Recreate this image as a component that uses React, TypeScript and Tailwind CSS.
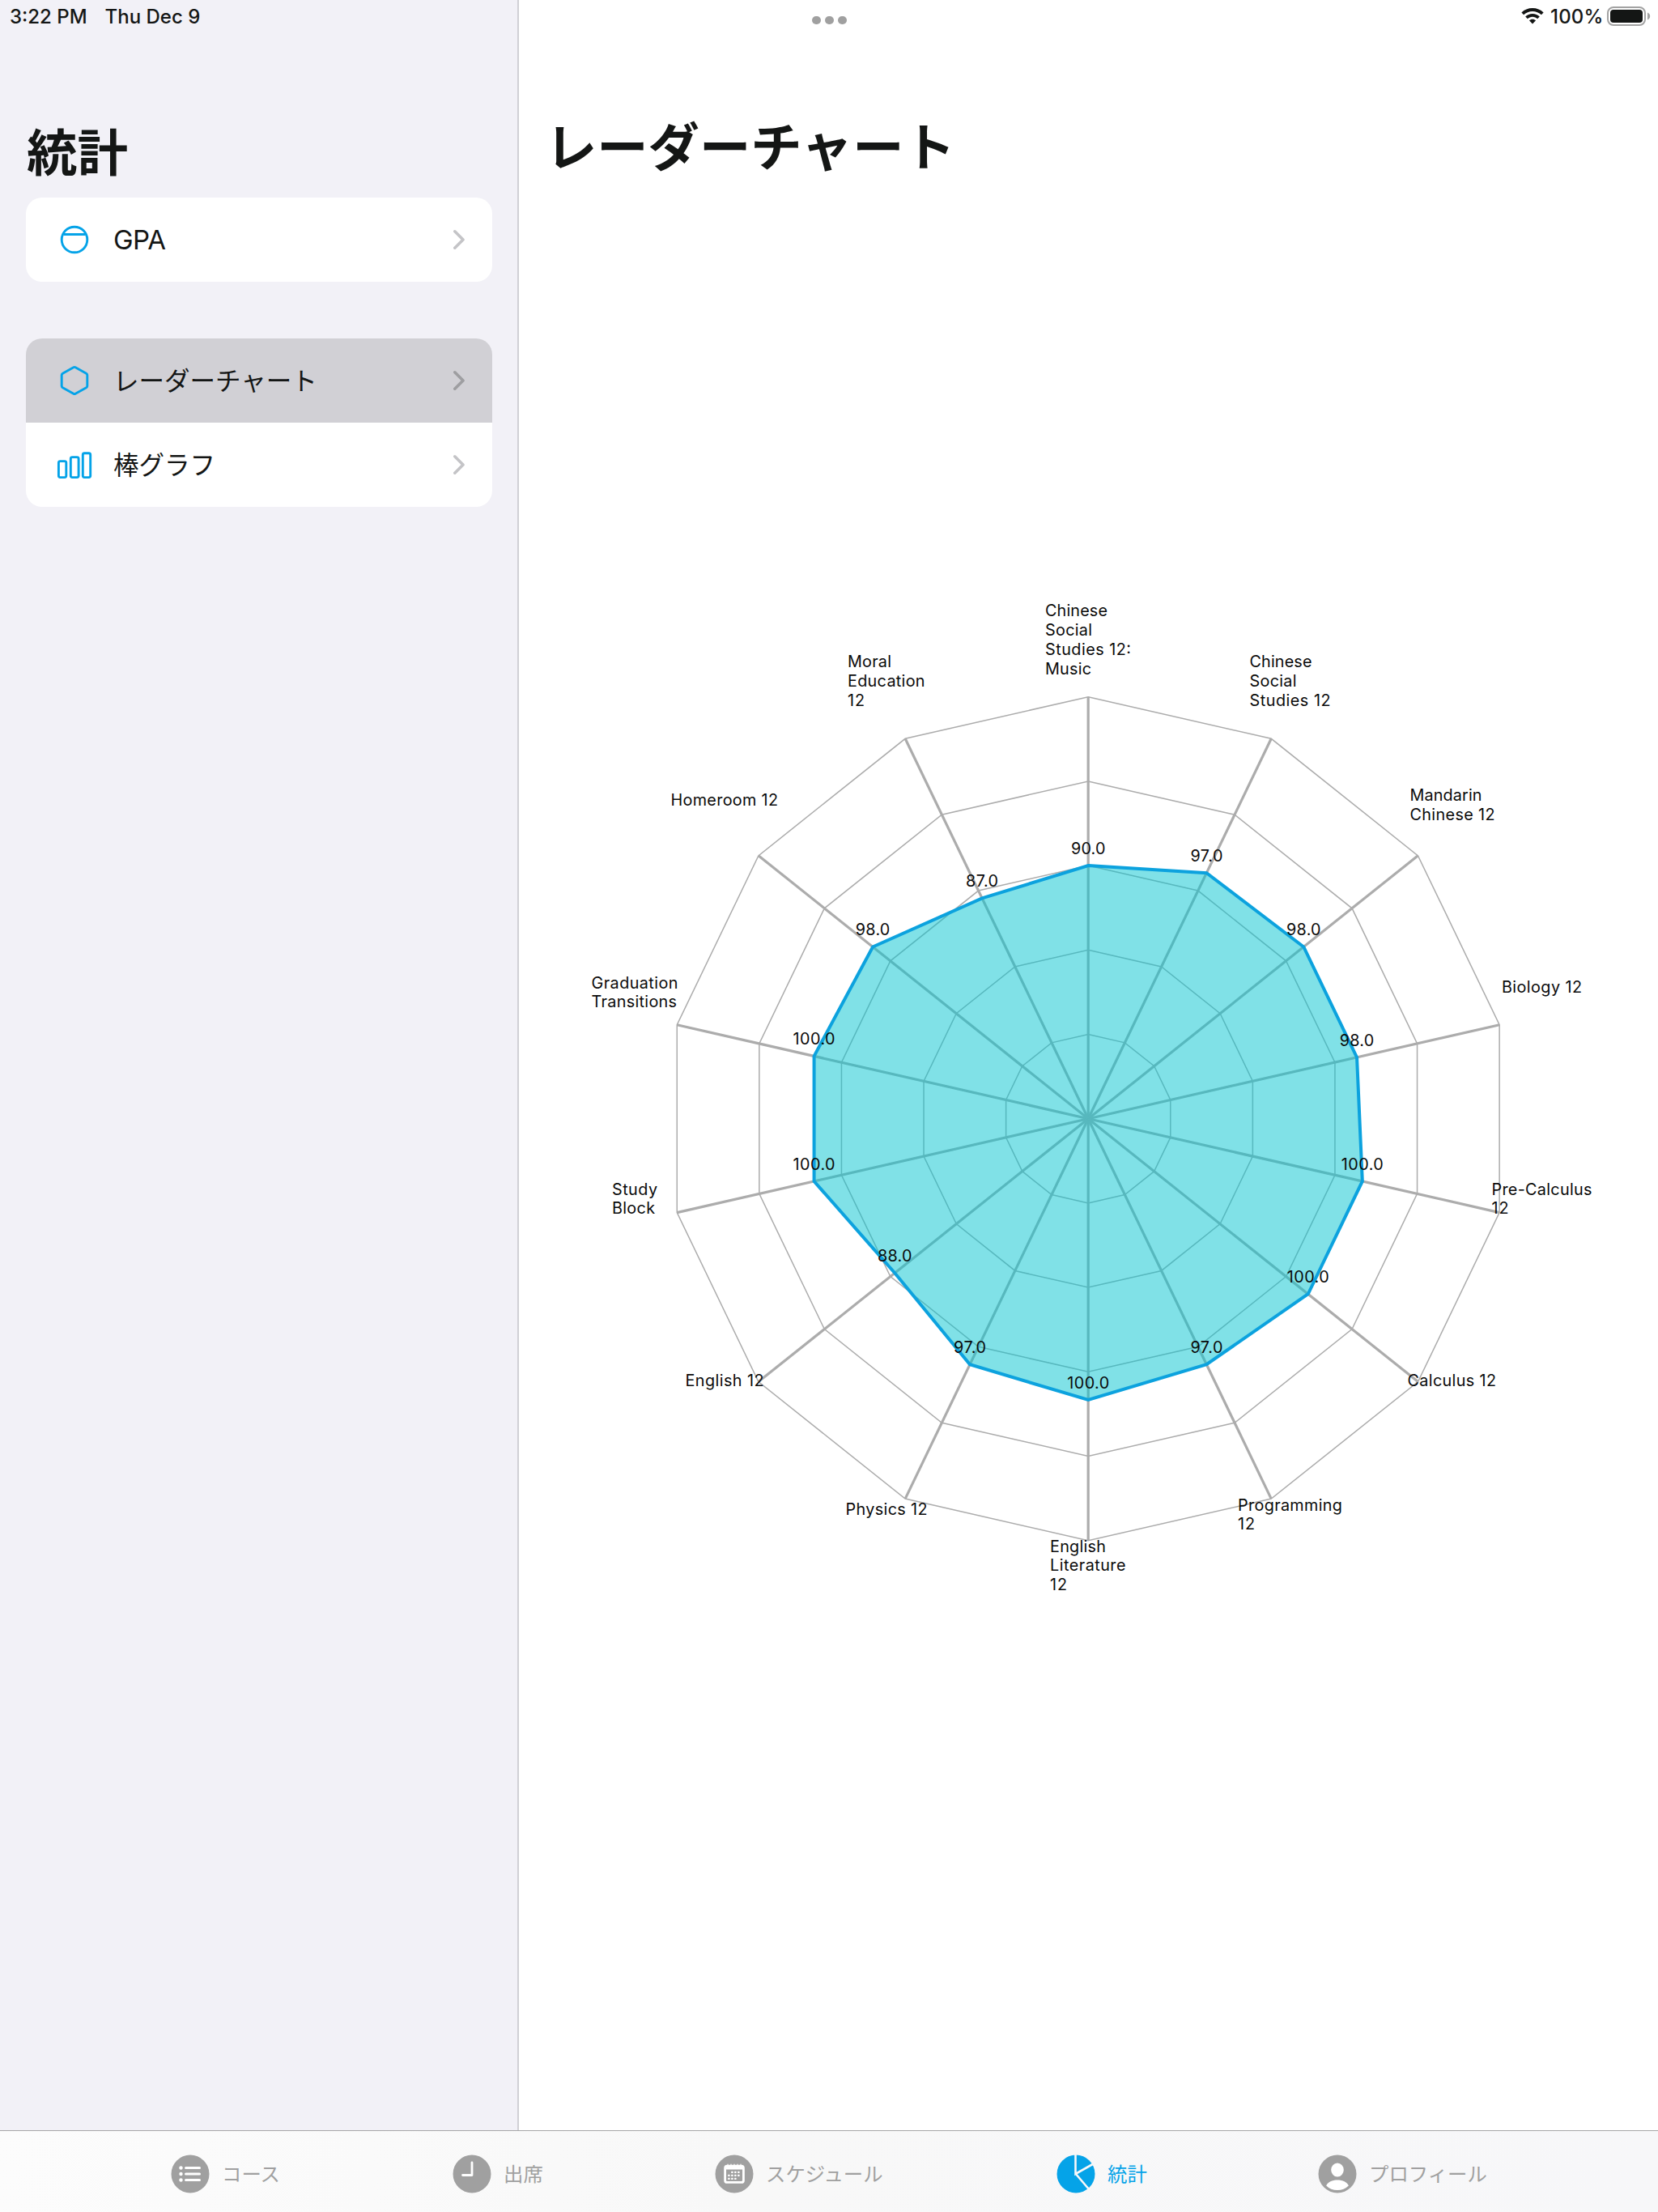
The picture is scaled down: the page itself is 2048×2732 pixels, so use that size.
import React from "react";

type Subject = {
  lines: string[];
  widths: number[];
  x: number;
  y: number[];
  value: number;
};

const CX = 1344.2 - 641;
const CY = 1381.7 - 300;
const R = 521;

const subjects: Subject[] = [
  { lines: ["Chinese", "Social", "Studies 12:", "Music"], widths: [76, 57, 105, 56], x: 1291.5, y: [761, 785, 809, 833], value: 90 },
  { lines: ["Chinese", "Social", "Studies 12"], widths: [76, 57, 99], x: 1544, y: [824, 848, 872], value: 97 },
  { lines: ["Mandarin", "Chinese 12"], widths: [88, 104], x: 1742, y: [989, 1013], value: 98 },
  { lines: ["Biology 12"], widths: [98], x: 1855.5, y: [1226], value: 98 },
  { lines: ["Pre-Calculus", "12"], widths: [123, 20], x: 1843, y: [1476, 1499], value: 100 },
  { lines: ["Calculus 12"], widths: [108.5], x: 1739, y: [1712], value: 100 },
  { lines: ["Programming", "12"], widths: [128, 20], x: 1529.5, y: [1865.5, 1889], value: 97 },
  { lines: ["English", "Literature", "12"], widths: [68, 92.5, 20], x: 1297.5, y: [1916.5, 1940, 1964], value: 100 },
  { lines: ["Physics 12"], widths: [100], x: 1045, y: [1871], value: 97 },
  { lines: ["English 12"], widths: [96], x: 847, y: [1712], value: 88 },
  { lines: ["Study", "Block"], widths: [55, 52], x: 756.5, y: [1476, 1499], value: 100 },
  { lines: ["Graduation", "Transitions"], widths: [106, 104.5], x: 731, y: [1220.5, 1244], value: 100 },
  { lines: ["Homeroom 12"], widths: [131.5], x: 829, y: [995], value: 98 },
  { lines: ["Moral", "Education", "12"], widths: [53, 94.5, 20], x: 1047.5, y: [824, 848, 872], value: 87 },
];

const point = (i: number, r: number) => {
  const a = (i * 2 * Math.PI) / subjects.length;
  return [CX + r * Math.sin(a), CY - r * Math.cos(a)] as const;
};

const ring = (radius: (i: number) => number) =>
  subjects.map((_, i) => point(i, radius(i)).map((n) => n.toFixed(2)).join(",")).join(" ");

const valueWidth = (v: number) => (v === 100 ? 52 : v === 97 || v === 87 ? 40 : 42.5);

function RadarChart() {
  return (
    <svg width="1407" height="1800" viewBox="0 0 1407 1800" className="block font-[Inter,sans-serif]">
      <g fill="none" stroke="#acacac">
        {subjects.map((_, i) => {
          const [x, y] = point(i, R);
          return <line key={i} x1={CX} y1={CY} x2={x} y2={y} strokeWidth="3.2" />;
        })}
        {[1, 2, 3, 4, 5].map((n) => (
          <polygon key={n} points={ring(() => (R * n) / 5)} strokeWidth="1.5" />
        ))}
      </g>
      <polygon points={ring((i) => (R * subjects[i].value) / 150)} fill="#02c4d0" fillOpacity="0.5" />
      <polygon
        points={ring((i) => (R * subjects[i].value) / 150)}
        fill="none"
        stroke="#0ca2de"
        strokeWidth="4"
      />
      {subjects.map((s, i) => {
        const [x, y] = point(i, (R * s.value) / 150);
        return (
          <g key={i} fill="#0a0a0a">
            <text x={x} y={y - 14} fontSize="19.8" textAnchor="middle" textLength={valueWidth(s.value)}>
              {s.value.toFixed(1)}
            </text>
            {s.lines.map((line, j) => (
              <text key={j} x={s.x - 641.5} y={s.y[j] - 300} fontSize="19.8" textLength={s.widths[j] + 1}>
                {line}
              </text>
            ))}
          </g>
        );
      })}
    </svg>
  );
}

function Chevron({ active = false }: { active?: boolean }) {
  return (
    <svg width="16" height="28" viewBox="0 0 16 28" fill="none" className={active ? "text-[#9e9ea1]" : "text-[#c4c4c7]"}>
      <path d="M1.8 3.8 12 14 1.8 24.2" stroke="currentColor" strokeWidth="3.6" strokeLinecap="round" strokeLinejoin="round" />
    </svg>
  );
}

function GaugeIcon() {
  return (
    <svg width="44" height="44" viewBox="0 0 44 44" fill="none" stroke="#05a3e8" strokeWidth="2.9">
      <circle cx="22" cy="22" r="15.8" />
      <path d="M8.5 15.5h27" />
    </svg>
  );
}

function HexagonIcon() {
  return (
    <svg width="44" height="44" viewBox="0 0 44 44" fill="none" stroke="#05a3e8" strokeWidth="2.9" strokeLinejoin="round">
      <path d="M20.8 5.7Q22 5 23.2 5.7L36.6 13.2Q37.8 14 37.8 15.2V28.8Q37.8 30 36.6 30.8L23.2 38.3Q22 39 20.8 38.3L7.4 30.8Q6.2 30 6.2 28.8V15.2Q6.2 14 7.4 13.2Z" />
    </svg>
  );
}

function BarsIcon() {
  return (
    <svg width="44" height="44" viewBox="0 0 44 44" fill="none" stroke="#05a3e8" strokeWidth="2.9">
      <rect x="2.4" y="17.6" width="9.4" height="20" rx="2" />
      <rect x="17.3" y="12.6" width="9.8" height="25" rx="2" />
      <rect x="32.3" y="7.8" width="9.4" height="29.8" rx="2" />
    </svg>
  );
}

function Row({ icon, label, active = false, latin = false }: { icon: React.ReactNode; label: string; active?: boolean; latin?: boolean }) {
  return (
    <div className={`flex h-[104px] items-center pr-[32px] pl-[38px] ${active ? "bg-[#d1d0d5]" : "bg-white"}`}>
      {icon}
      <span
        className={
          latin
            ? "ml-[26px] flex-1 font-[Inter,sans-serif] text-[33px] leading-[40px] tracking-[-0.5px]"
            : "mb-[4px] ml-[26px] flex-1 font-['Noto_Sans_CJK_JP',sans-serif] text-[31.5px] leading-[48px]"
        }
      >
        {label}
      </span>
      <Chevron active={active} />
    </div>
  );
}

function Sidebar() {
  return (
    <aside className="flex w-[641px] flex-col border-r-2 border-[#d0d0d5] bg-[#f2f1f7] px-8">
      <div className="-ml-[20px] flex h-[41px] items-center gap-[22px] font-[Inter,sans-serif] text-[24px] font-medium whitespace-nowrap">
        <span>3:22 PM</span>
        <span>Thu Dec 9</span>
      </div>
      <h1 className="mt-[96px] ml-px font-['Noto_Sans_CJK_JP',sans-serif] text-[62.5px] leading-[96px] font-bold">統計</h1>
      <nav className="mt-[11px] w-[576px]">
        <div className="overflow-hidden rounded-[20px]">
          <Row icon={<GaugeIcon />} label="GPA" latin />
        </div>
        <div className="mt-[70px] overflow-hidden rounded-[20px]">
          <Row icon={<HexagonIcon />} label="レーダーチャート" active />
          <Row icon={<BarsIcon />} label="棒グラフ" />
        </div>
      </nav>
    </aside>
  );
}

function StatusRight() {
  return (
    <div className="flex items-center font-[Inter,sans-serif] text-[24px] font-medium">
      <svg width="28" height="22" viewBox="0 0 28 22" fill="#141615">
        <path d="M14 1C8.700 1 3.900 3 .4 6.400l2.700 2.800C6 6.500 9.800 4.900 14 4.900s8 1.600 10.900 4.300l2.700-2.800C24.100 3 19.300 1 14 1Z" />
        <path d="M14 7.900c-3.400 0-6.500 1.300-8.800 3.500l2.700 2.800c1.600-1.500 3.700-2.500 6.100-2.500s4.500 1 6.100 2.500l2.700-2.800C20.500 9.200 17.400 7.900 14 7.900Z" />
        <path d="M14 14.700c-1.600 0-3 .6-4.100 1.600L14 20.600l4.100-4.300c-1.100-1-2.500-1.600-4.100-1.600Z" />
      </svg>
      <span className="mt-px ml-[8px] w-[66px] tracking-[0.2px] whitespace-nowrap">100%</span>
      <svg width="54" height="24" viewBox="0 0 54 24" className="ml-[4px]">
        <rect x="1" y="1" width="46" height="22" rx="7" fill="none" stroke="#a3a3a3" strokeWidth="2" />
        <rect x="4" y="4" width="40" height="16" rx="4" fill="#141615" />
        <path d="M50 7.500c2 .9 3.200 2.500 3.200 4.500s-1.200 3.600-3.200 4.500Z" fill="#a3a3a3" />
      </svg>
    </div>
  );
}

function Detail() {
  return (
    <main className="flex flex-1 flex-col bg-white">
      <div className="grid h-[40px] grid-cols-[1fr_auto] items-center pr-[9px]">
        <div className="mt-[10px] ml-[362px] flex gap-[5.5px]">
          <i className="size-[10.5px] rounded-full bg-[#a0a0a0]" />
          <i className="size-[10.5px] rounded-full bg-[#a0a0a0]" />
          <i className="size-[10.5px] rounded-full bg-[#a0a0a0]" />
        </div>
        <StatusRight />
      </div>
      <h2 className="mt-[90px] ml-[33px] h-[170px] font-['Noto_Sans_CJK_JP',sans-serif] text-[63.3px] leading-[96px] font-bold">レーダーチャート</h2>
      <RadarChart />
    </main>
  );
}

function ListTabIcon() {
  return (
    <svg width="48" height="48" viewBox="0 0 48 48">
      <circle cx="24" cy="24" r="23.5" fill="#a0a0a0" />
      <g fill="#fff">
        {[16.5, 24, 31.5].map((y) => (
          <g key={y}>
            <circle cx="12.5" cy={y} r="2.2" />
            <rect x="17" y={y - 1.5} width="20" height="3" rx="1.5" />
          </g>
        ))}
      </g>
    </svg>
  );
}

function ClockTabIcon() {
  return (
    <svg width="48" height="48" viewBox="0 0 48 48">
      <circle cx="24" cy="24" r="23.5" fill="#a0a0a0" />
      <path d="M24 10v15.500H12.500" fill="none" stroke="#fff" strokeWidth="2.8" strokeLinecap="round" strokeLinejoin="round" />
    </svg>
  );
}

function CalendarTabIcon() {
  return (
    <svg width="48" height="48" viewBox="0 0 48 48">
      <circle cx="24" cy="24" r="23.5" fill="#a0a0a0" />
      <rect x="12.6" y="14.2" width="22.8" height="20.2" rx="2.5" fill="none" stroke="#fff" strokeWidth="2.8" />
      <path d="M12 14h24v4.500H12z" fill="#fff" />
      <path d="M16 12.800v-1M20 12.800v-1M24 12.800v-1M28 12.800v-1M32 12.800v-1" stroke="#fff" strokeWidth="1.5" />
      <g fill="#fff">
        {[20.8, 24.8, 28.8].map((y, r) =>
          [16.2, 20.2, 24.2, 28.2].map((x, c) =>
            (r === 0 && c === 0) || (r === 2 && c === 3) ? null : <rect key={`${r}${c}`} x={x} y={y} width="2.3" height="2.3" rx="0.5" />
          )
        )}
      </g>
    </svg>
  );
}

function PieTabIcon() {
  return (
    <svg width="48" height="48" viewBox="0 0 48 48">
      <circle cx="24" cy="24" r="23.5" fill="#05a3e8" />
      <path d="M23.500 0v24L45.500 11.500M23.500 23.500 41 44" fill="none" stroke="#f8f8f9" strokeWidth="2.6" />
    </svg>
  );
}

function PersonTabIcon() {
  return (
    <svg width="48" height="48" viewBox="0 0 48 48">
      <circle cx="24" cy="24" r="23.5" fill="#a0a0a0" />
      <ellipse cx="24" cy="19" rx="7.8" ry="8.6" fill="#fff" />
      <path d="M10.200 38.500c2-4.700 7.300-7 13.800-7s11.800 2.300 13.800 7c-3.700 3.600-8.400 5.600-13.800 5.600s-10.100-2-13.800-5.600Z" fill="#fff" />
    </svg>
  );
}

function Tab({ icon, label, active = false }: { icon: React.ReactNode; label: string; active?: boolean }) {
  return (
    <div className={`flex items-center gap-[15px] ${active ? "text-[#05a3e8]" : "text-[#a0a0a0]"}`}>
      {icon}
      <span className="mb-[2px] font-['Noto_Sans_CJK_JP',sans-serif] text-[24.4px] leading-[36px] whitespace-nowrap">{label}</span>
    </div>
  );
}

function TabBar() {
  return (
    <footer className="grid h-[101px] grid-cols-[348px_324px_422px_323px_auto] items-center border-t border-[#a6a6a8] bg-linear-to-r from-[#fcfcfc] via-[#f8f8f8] via-45% to-[#f7f7f9] pt-[5px] pl-[211px]">
      <Tab icon={<ListTabIcon />} label="コース" />
      <Tab icon={<ClockTabIcon />} label="出席" />
      <Tab icon={<CalendarTabIcon />} label="スケジュール" />
      <Tab icon={<PieTabIcon />} label="統計" active />
      <Tab icon={<PersonTabIcon />} label="プロフィール" />
    </footer>
  );
}

export default function App() {
  return (
    <div className="flex h-[2732px] w-[2048px] flex-col overflow-hidden bg-white text-[#141615]">
      <div className="flex h-[2631px]">
        <Sidebar />
        <Detail />
      </div>
      <TabBar />
    </div>
  );
}
